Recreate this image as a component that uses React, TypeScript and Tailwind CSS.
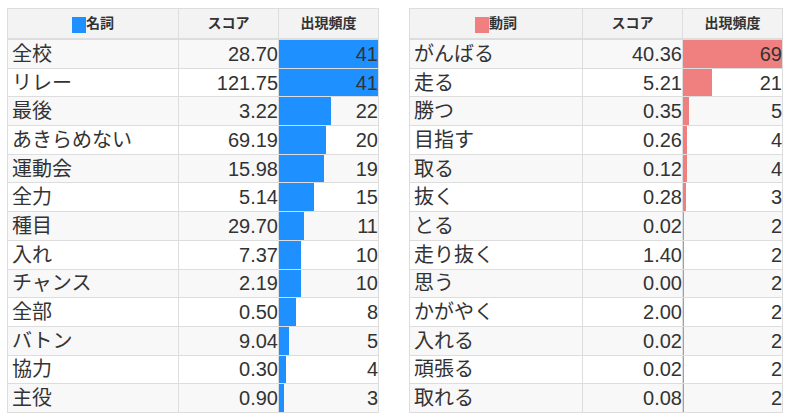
type Row = [string, string, number];

const nouns: Row[] = [
  ["全校", "28.70", 41],
  ["リレー", "121.75", 41],
  ["最後", "3.22", 22],
  ["あきらめない", "69.19", 20],
  ["運動会", "15.98", 19],
  ["全力", "5.14", 15],
  ["種目", "29.70", 11],
  ["入れ", "7.37", 10],
  ["チャンス", "2.19", 10],
  ["全部", "0.50", 8],
  ["バトン", "9.04", 5],
  ["協力", "0.30", 4],
  ["主役", "0.90", 3],
];

const verbs: Row[] = [
  ["がんばる", "40.36", 69],
  ["走る", "5.21", 21],
  ["勝つ", "0.35", 5],
  ["目指す", "0.26", 4],
  ["取る", "0.12", 4],
  ["抜く", "0.28", 3],
  ["とる", "0.02", 2],
  ["走り抜く", "1.40", 2],
  ["思う", "0.00", 2],
  ["かがやく", "2.00", 2],
  ["入れる", "0.02", 2],
  ["頑張る", "0.02", 2],
  ["取れる", "0.08", 2],
];

function WordTable({
  title,
  rows,
  color,
  firstCol,
}: {
  title: string;
  rows: Row[];
  color: string;
  firstCol: string;
}) {
  const max = Math.max(...rows.map((r) => r[2]));
  const swatch = color === "blue" ? "bg-[#1e90ff]" : "bg-[#f08080]";

  return (
    <div className="border-x border-t border-[#ddd] text-[#333]">
      {/* header */}
      <div className="flex h-[31px] border-b-2 border-[#ddd] bg-[#f3f3f3] text-[14px] font-bold">
        <div className={`${firstCol} flex items-center justify-center border-r border-[#ddd]`}>
          <span className={`inline-block h-[16px] w-[14px] translate-y-[1px] ${swatch}`} />
          <span>{title}</span>
        </div>
        <div className="flex w-[100px] items-center justify-center border-r border-[#ddd]">スコア</div>
        <div className="flex w-[99px] items-center justify-center">出現頻度</div>
      </div>

      {/* body */}
      {rows.map(([word, score, freq], i) => (
        <div
          key={word}
          className={`flex h-[28.7px] border-b border-[#ddd] text-[20px] ${i % 2 === 0 ? "bg-[#f8f8f8]" : "bg-white"}`}
        >
          <div className={`${firstCol} flex items-center border-r border-[#ddd] pl-[4px]`}>{word}</div>
          <div className="flex w-[100px] items-center justify-end border-r border-[#ddd]">{score}</div>
          <div className="relative flex w-[99px] items-center justify-end">
            <div
              className={`absolute inset-y-0 left-0 ${swatch}`}
              style={{ width: `${((freq - 1) / (max - 1)) * 100}%` }}
            />
            <span className="relative">{freq}</span>
          </div>
        </div>
      ))}
    </div>
  );
}

export default function App() {
  return (
    <div
      className="flex h-[418px] w-[788px] items-start gap-[30px] bg-white pl-[7px] pt-[8px]"
      style={{ fontFamily: '"Liberation Sans", "Noto Sans CJK JP", sans-serif' }}
    >
      <WordTable title="名詞" rows={nouns} color="blue" firstCol="w-[171px]" />
      <WordTable title="動詞" rows={verbs} color="red" firstCol="w-[173px]" />
    </div>
  );
}
